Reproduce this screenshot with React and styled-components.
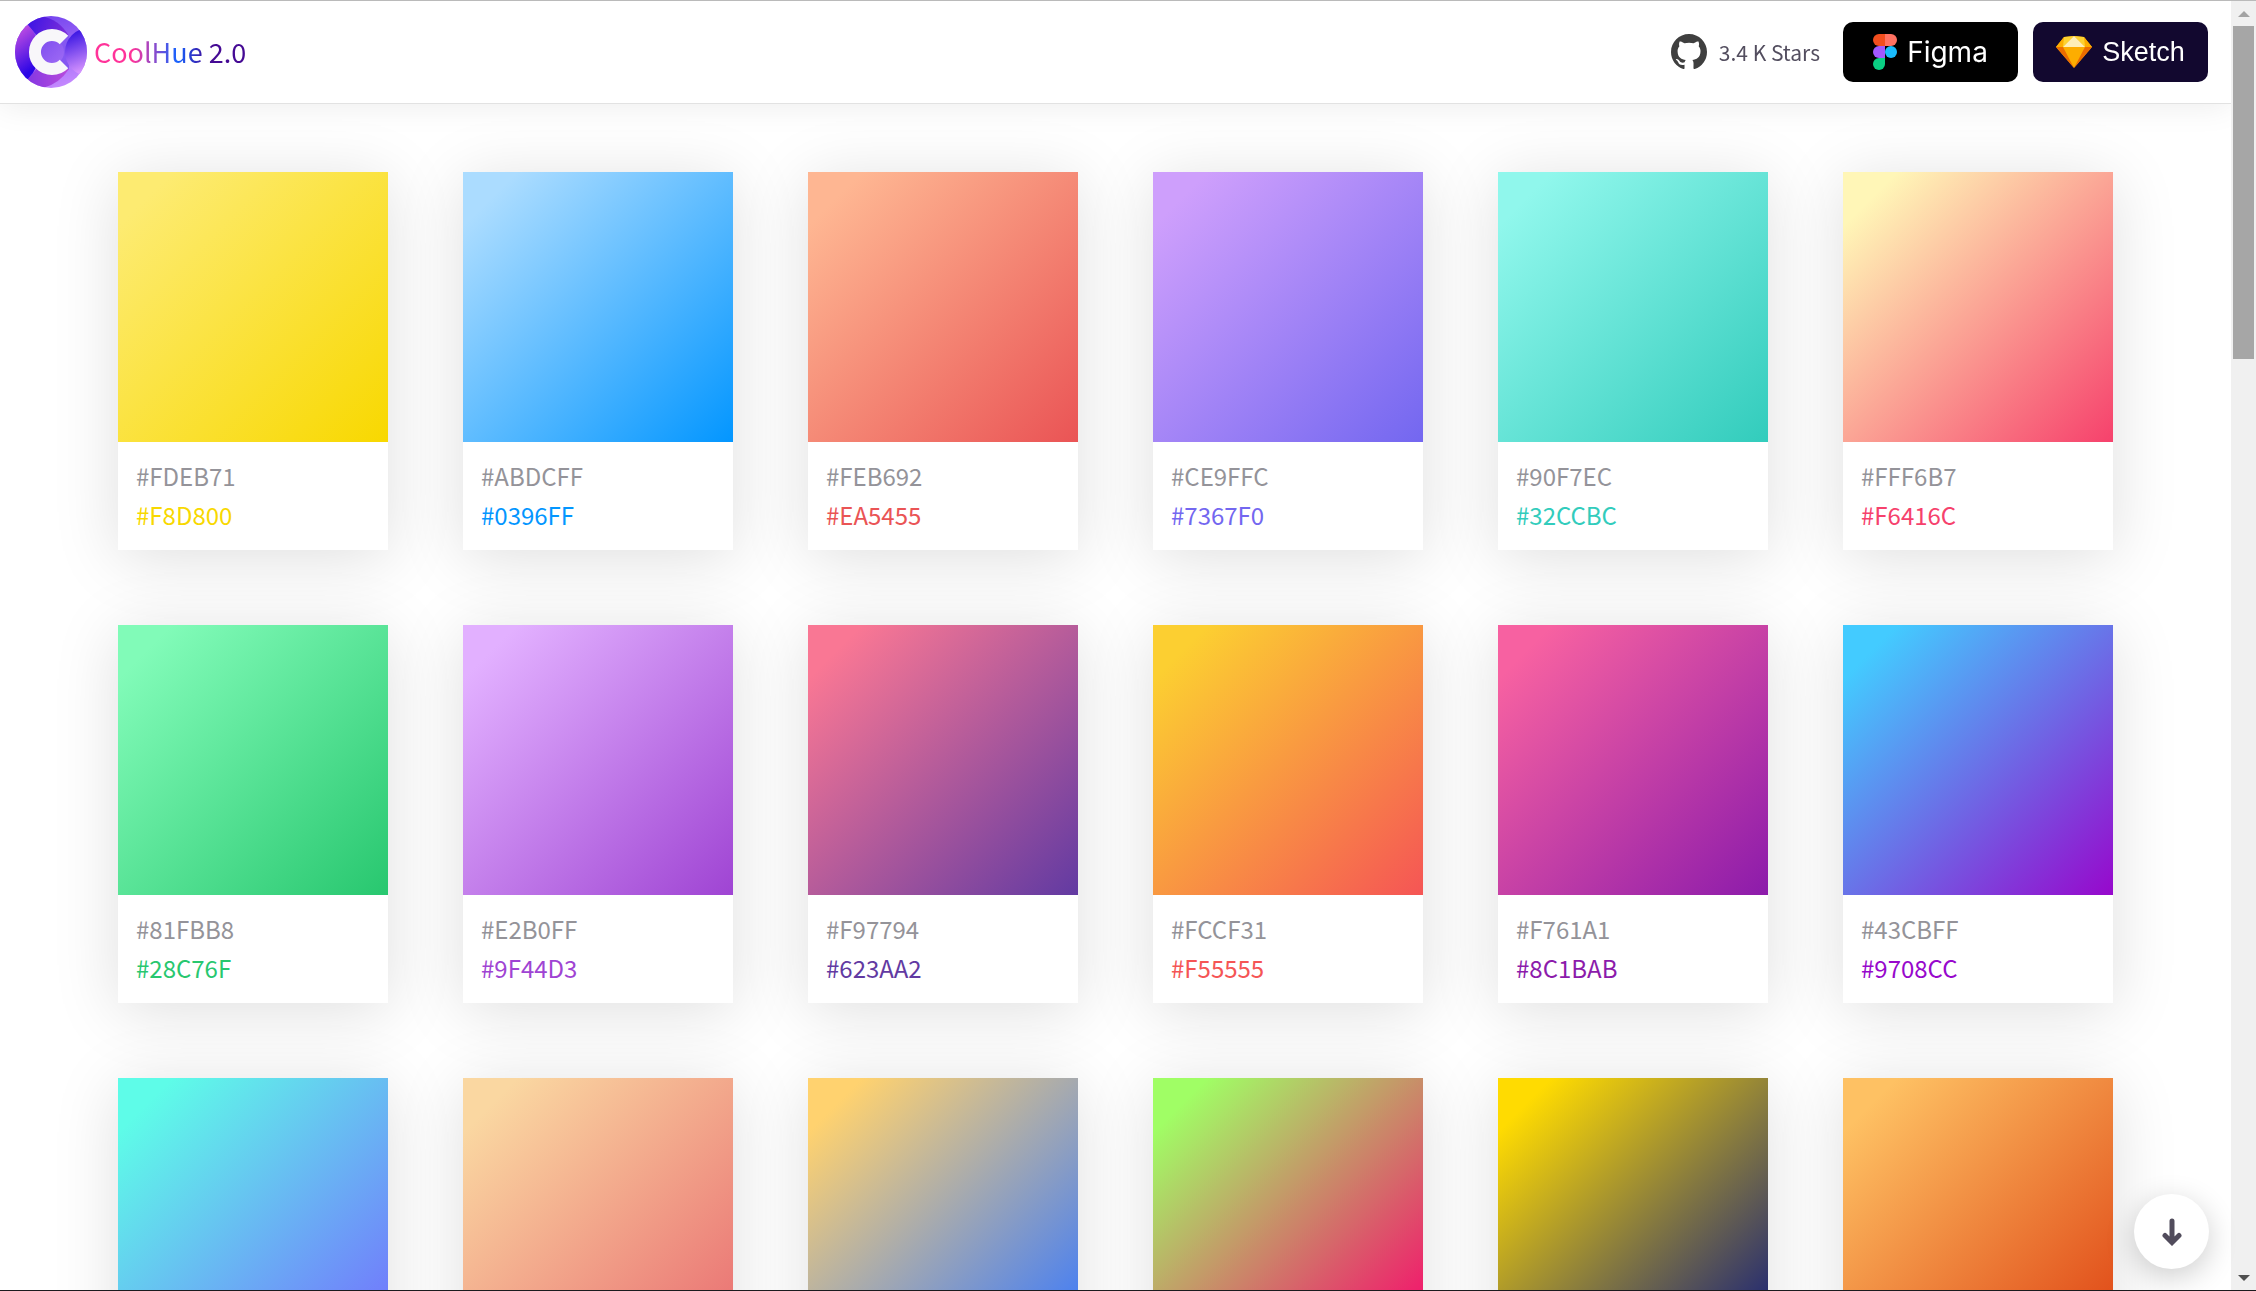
import React from "react";
import styled, { createGlobalStyle } from "styled-components";

const gradients = [
  ["#FDEB71", "#F8D800"],
  ["#ABDCFF", "#0396FF"],
  ["#FEB692", "#EA5455"],
  ["#CE9FFC", "#7367F0"],
  ["#90F7EC", "#32CCBC"],
  ["#FFF6B7", "#F6416C"],
  ["#81FBB8", "#28C76F"],
  ["#E2B0FF", "#9F44D3"],
  ["#F97794", "#623AA2"],
  ["#FCCF31", "#F55555"],
  ["#F761A1", "#8C1BAB"],
  ["#43CBFF", "#9708CC"],
  ["#5EFCE8", "#736EFE"],
  ["#FAD7A1", "#E96D71"],
  ["#FFD26F", "#3677FF"],
  ["#A0FE65", "#FA016D"],
  ["#FFDB01", "#0E197D"],
  ["#FEC163", "#DE4313"],
];

const Logo = () => (
  <svg width="72" height="72" viewBox="0 0 72 72" aria-hidden="true">
    <defs>
      <clipPath id="disc">
        <circle cx="36" cy="36" r="36" />
      </clipPath>
      <linearGradient id="base" x1="0.4" y1="0" x2="0.7" y2="1">
        <stop offset="0" stopColor="#7444ee" />
        <stop offset="1" stopColor="#c78bff" />
      </linearGradient>
      <linearGradient id="left" x1="0" y1="0" x2="0.3" y2="1">
        <stop offset="0.1" stopColor="#ca52e2" />
        <stop offset="0.95" stopColor="#2b05e6" />
      </linearGradient>
      <linearGradient id="top" x1="0" y1="0" x2="1" y2="0.3">
        <stop offset="0" stopColor="#3510e6" />
        <stop offset="1" stopColor="#7d2fd9" />
      </linearGradient>
      <linearGradient id="bottom" x1="0" y1="0" x2="1" y2="0">
        <stop offset="0" stopColor="#8236e2" />
        <stop offset="1" stopColor="#b94cdc" />
      </linearGradient>
      <linearGradient id="inner" x1="0" y1="0" x2="1" y2="1">
        <stop offset="0" stopColor="#7c4bee" />
        <stop offset="1" stopColor="#a06cf5" />
      </linearGradient>
      <linearGradient id="side" x1="0.1" y1="0" x2="0.5" y2="1">
        <stop offset="0.1" stopColor="#3a16e3" />
        <stop offset="0.9" stopColor="#dc98ff" />
      </linearGradient>
    </defs>
    <g clipPath="url(#disc)">
      <rect width="72" height="72" fill="url(#base)" />
      <path d="M10 0H26Q44 3 54 20L36 36L12 8Z" fill="url(#top)" />
      <path d="M10 72H28Q44 68 54 53L36 36L12 64Z" fill="url(#bottom)" />
      <path d="M13 9Q24 20 24 36T13 63L0 64V6Z" fill="url(#left)" />
      <path d="M36 36L54 18V54Z" fill="#8557f1" />
      <circle cx="74" cy="36" r="24" fill="url(#side)" />
    </g>
    <circle cx="36" cy="36" r="13" fill="url(#inner)" />
    <path
      d="M49 24A17 17 0 1 0 49 48"
      fill="none"
      stroke="#f8f7fa"
      strokeWidth="12"
    />
  </svg>
);

const GithubLogo = () => (
  <svg width="36" height="36" viewBox="0 0 16 16" aria-hidden="true">
    <path
      fill="#3f3f3f"
      d="M8 0C3.58 0 0 3.58 0 8c0 3.54 2.29 6.53 5.47 7.59.4.07.55-.17.55-.38 0-.19-.01-.82-.01-1.49-2.01.37-2.53-.49-2.69-.94-.09-.23-.48-.94-.82-1.13-.28-.15-.68-.52-.01-.53.63-.01 1.08.58 1.23.82.72 1.21 1.87.87 2.33.66.07-.52.28-.87.51-1.07-1.78-.2-3.64-.89-3.64-3.95 0-.87.31-1.59.82-2.15-.08-.2-.36-1.02.08-2.12 0 0 .67-.21 2.2.82.64-.18 1.32-.27 2-.27.68 0 1.36.09 2 .27 1.53-1.04 2.2-.82 2.2-.82.44 1.1.16 1.92.08 2.12.51.56.82 1.27.82 2.15 0 3.07-1.87 3.75-3.65 3.95.29.25.54.73.54 1.48 0 1.07-.01 1.93-.01 2.2 0 .21.15.46.55.38A8.013 8.013 0 0 0 16 8c0-4.42-3.58-8-8-8z"
    />
  </svg>
);

const FigmaLogo = () => (
  <svg width="24" height="36" viewBox="0 0 24 36" aria-hidden="true">
    <path d="M6 0h6v12H6A6 6 0 0 1 6 0z" fill="#f24e1e" />
    <path d="M12 0h6a6 6 0 0 1 0 12h-6z" fill="#ff7262" />
    <path d="M6 12h6v12H6a6 6 0 0 1 0-12z" fill="#a259ff" />
    <circle cx="18" cy="18" r="6" fill="#1abcfe" />
    <path d="M6 24h6v6a6 6 0 1 1-6-6z" fill="#0acf83" />
  </svg>
);

const SketchLogo = () => (
  <svg width="36" height="32" viewBox="0 0 36 32" aria-hidden="true">
    <path d="M8 1L18 0L28 1L36 11L18 32L0 11Z" fill="#fdad00" />
    <path d="M0 11H7L18 32Z" fill="#ec6c00" />
    <path d="M36 11H29L18 32Z" fill="#ec6c00" />
    <path d="M8 1L7 11H0Z" fill="#fdad00" />
    <path d="M28 1L29 11H36Z" fill="#fdad00" />
    <path d="M8 1L18 0L7 11Z" fill="#fdd231" />
    <path d="M28 1L18 0L29 11Z" fill="#fdd231" />
    <path d="M18 0L29 11H7Z" fill="#feeeb7" />
  </svg>
);

const ArrowDown = () => (
  <svg width="20" height="28" viewBox="0 0 20 28" aria-hidden="true">
    <path
      d="M10 3V24M3 17.5L10 24.5L17 17.5"
      fill="none"
      stroke="#514c5c"
      strokeWidth="5"
      strokeLinecap="round"
    />
  </svg>
);

const Card = ({ from, to }) => (
  <CardContainer>
    <Swatch $from={from} $to={to} />
    <Codes>
      <Code>{from}</Code>
      <Code $color={to}>{to}</Code>
    </Codes>
  </CardContainer>
);

const App = () => {
  return (
    <Window>
      <GlobalStyle />
      <Page>
        <Header>
          <Brand href="#top">
            <Logo />
            <BrandName>CoolHue 2.0</BrandName>
          </Brand>
          <Actions>
            <Stars href="#stars">
              <GithubLogo />
              3.4 K Stars
            </Stars>
            <Download href="#figma">
              <FigmaLogo />
              Figma
            </Download>
            <Download href="#sketch" $sketch>
              <SketchLogo />
              Sketch
            </Download>
          </Actions>
        </Header>
        <Grid>
          {gradients.map(([from, to]) => (
            <Card key={from} from={from} to={to} />
          ))}
        </Grid>
      </Page>
      <ScrollButton type="button" aria-label="Scroll down">
        <ArrowDown />
      </ScrollButton>
      <Scrollbar>
        <ScrollArrow $up />
        <Thumb />
        <ScrollArrow />
      </Scrollbar>
    </Window>
  );
};

const GlobalStyle = createGlobalStyle`
  * {
    box-sizing: border-box;
  }
  body {
    margin: 0;
    background: #fff;
    color: #534e5f;
    font-family: "Noto Sans CJK SC", "Noto Sans", sans-serif;
  }
  a {
    color: inherit;
    text-decoration: none;
  }
`;

const Window = styled.div`
  position: relative;
  display: flex;
  height: 100vh;
  border-top: 1px solid #bababa;
  border-bottom: 1px solid #1b1b1e;
`;

const Page = styled.div`
  flex: 1;
  overflow-x: hidden;
  overflow-y: auto;
  scrollbar-width: none;
`;

const Header = styled.header`
  position: sticky;
  top: 0;
  display: flex;
  align-items: center;
  justify-content: space-between;
  height: 103px;
  padding: 0 23px 0 15px;
  background: #fff;
  border-bottom: 1px solid #e2e2e2;
  box-shadow: 0 2px 30px rgba(0, 0, 0, 0.08);
  z-index: 1;
`;

const Brand = styled.a`
  display: flex;
  align-items: center;
  gap: 7px;
`;

const BrandName = styled.span`
  font-size: 27px;
  line-height: 40px;
  background: linear-gradient(
    90deg,
    #ff3399 25%,
    #1463ff 55%,
    #450a94 75%
  );
  background-clip: text;
  color: transparent;
`;

const Actions = styled.div`
  display: flex;
  align-items: center;
  gap: 15px;
`;

const Stars = styled.a`
  display: flex;
  align-items: center;
  gap: 12px;
  margin-right: 8px;
  font-size: 21px;
`;

const Download = styled.a`
  display: flex;
  align-items: center;
  justify-content: center;
  gap: 10px;
  width: 175px;
  height: 60px;
  border-radius: 10px;
  background: ${(p) => (p.$sketch ? "#12082f" : "#000")};
  color: #fff;
  font-family: ${(p) =>
    p.$sketch ? '"Liberation Sans", Arial' : 'Inter, "Open Sans"'}, sans-serif;
  font-size: ${(p) => (p.$sketch ? "27px" : "28px")};
`;

const Grid = styled.main`
  display: grid;
  grid-template-columns: repeat(auto-fit, 270px);
  justify-content: center;
  gap: 75px;
  padding: 68px 75px;
`;

const CardContainer = styled.article`
  background: #fff;
  box-shadow: 0 8px 62px rgba(0, 0, 0, 0.13);
`;

const Swatch = styled.div`
  height: 270px;
  background: linear-gradient(
    135deg,
    ${(p) => p.$from} 10%,
    ${(p) => p.$to} 100%
  );
`;

const Codes = styled.div`
  padding: 14px 18px 16px;
`;

const Code = styled.div`
  font-size: 24px;
  line-height: 39px;
  color: ${(p) => p.$color || "#949399"};
`;

const ScrollButton = styled.button`
  position: absolute;
  right: 47px;
  bottom: 21px;
  display: flex;
  align-items: center;
  justify-content: center;
  width: 75px;
  height: 75px;
  padding: 0;
  border: 0;
  border-radius: 50%;
  background: #fff;
  box-shadow: 0 8px 30px rgba(0, 0, 0, 0.2);
`;

const Scrollbar = styled.aside`
  display: flex;
  flex-direction: column;
  align-items: center;
  width: 25px;
  background: #f0f0f0;
`;

const ScrollArrow = styled.span`
  margin: ${(p) => (p.$up ? "10px 0 9px" : "auto 0 9px")};
  border: 6px solid transparent;
  border-top: ${(p) => (p.$up ? "0" : "6px solid #505050")};
  border-bottom: ${(p) => (p.$up ? "6px solid #a3a3a3" : "0")};
`;

const Thumb = styled.div`
  width: 21px;
  height: 333px;
  background: #a6a6a6;
`;

export default App;
